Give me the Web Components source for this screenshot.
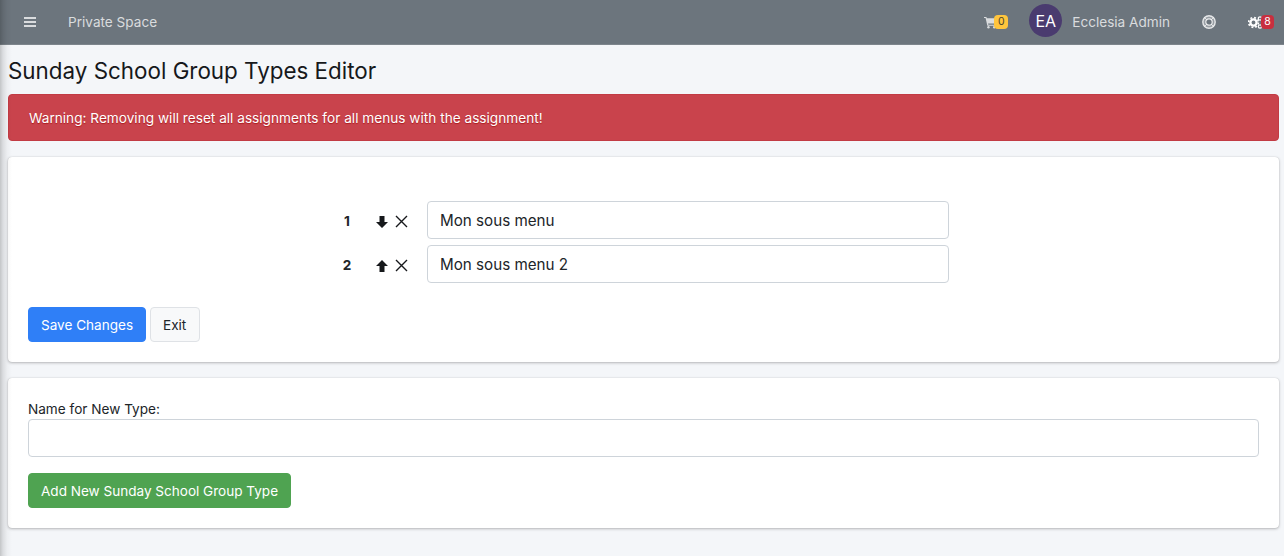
<!DOCTYPE html>
<html lang="en"><head><meta charset="utf-8"><title>Editor</title>
<style>
html,body{margin:0;padding:0;height:100%}
body{background:#f4f6f9;font-family:Inter,"Liberation Sans",sans-serif;font-size:13.6px;color:#212529;overflow:hidden}
</style></head><body>
<app-shell>
<top-bar></top-bar>
<page-title>Sunday School Group Types Editor</page-title>
<warn-alert>Warning: Removing will reset all assignments for all menus with the assignment!</warn-alert>
<ui-card pad="44px 20px 20px">
  <type-list>
    <type-row num="1" dir="down" value="Mon sous menu"></type-row>
    <type-row num="2" dir="up" value="Mon sous menu 2"></type-row>
  </type-list>
  <btn-row>
    <ui-btn kind="primary">Save Changes</ui-btn>
    <ui-btn kind="light">Exit</ui-btn>
  </btn-row>
</ui-card>
<ui-card pad="23px 20px 20px">
  <new-type label="Name for New Type:"></new-type>
  <btn-row><ui-btn kind="success">Add New Sunday School Group Type</ui-btn></btn-row>
</ui-card>
</app-shell>
<script>
function def(name, html){
  customElements.define(name, class extends HTMLElement{
    connectedCallback(){
      if(this.shadowRoot) return;
      this.attachShadow({mode:'open'}).innerHTML = html;
    }
  });
}
def('app-shell',`<style>
:host{display:block;position:relative;height:556px;overflow:hidden}
.shade{position:absolute;left:0;top:0;bottom:0;width:12px;pointer-events:none;background:linear-gradient(to right,rgba(0,0,0,.2),rgba(0,0,0,.1) 25%,rgba(0,0,0,.03) 60%,rgba(0,0,0,0))}
</style><slot></slot><div class="shade"></div>`);
def('top-bar',`<style>
:host{display:flex;align-items:center;height:45px;box-sizing:border-box;background:#6c757d;border-bottom:1px solid #7d858c;color:rgba(255,255,255,.75);font-size:13.6px;line-height:16px}
.burger{margin-left:24px;width:12px;height:12px;display:block}
.brand{margin-left:32px;margin-top:-1px}
.sp{flex:1}
.cart{position:relative;width:24px;height:16px;margin-right:21px}
.cart svg{position:absolute;left:0;top:2px;width:13px;height:13px}
.badge{position:absolute;font-size:10.5px;line-height:14px;height:14px;border-radius:4px;text-align:center}
.cart .badge{left:10px;top:1px;width:14px;background:#ffc53d;color:#4a4630}
.av{align-self:flex-start;margin-top:4px;width:33px;height:33px;border-radius:50%;background:#4a3b6f;color:#fff;font-size:16px;display:flex;align-items:center;justify-content:center;margin-right:10px}
.name{margin-right:32px;margin-top:-1px}
.ring{width:14px;height:14px;margin-right:32px;display:block;margin-top:-1px}
.gear{position:relative;width:26px;height:16px;margin-right:10px}
.gear svg{position:absolute;left:0;top:2px;width:16px;height:13px}
.gear .badge{left:13px;top:1px;width:13px;background:#c82f3f;color:#fff}
</style>
<svg class="burger" viewBox="0 0 12 12"><path d="M0 1h12v2H0zM0 5h12v2H0zM0 9h12v2H0z" fill="currentColor"/></svg>
<span class="brand">Private Space</span><span class="sp"></span>
<span class="cart"><svg viewBox="0 0 14 13"><path d="M0 .5h2.6l.4 1.5H14l-1.4 5.6H4.4l.3 1.2h7.8v1.2H3.6L1.7 1.7H0z" fill="currentColor"/><circle cx="4.8" cy="11.6" r="1.3" fill="currentColor"/><circle cx="11" cy="11.6" r="1.3" fill="currentColor"/></svg><span class="badge">0</span></span>
<span class="av">EA</span><span class="name">Ecclesia Admin</span>
<svg class="ring" viewBox="0 0 14 14" fill="none"><circle cx="7" cy="7" r="4.7" stroke="rgba(255,255,255,.3)" stroke-width="3.2"/><circle cx="7" cy="7" r="6.2" stroke="rgba(255,255,255,.8)" stroke-width="1.4"/><circle cx="7" cy="7" r="3.2" stroke="rgba(255,255,255,.8)" stroke-width="1.2"/><path d="M2.6 2.600l2.200 2.200M11.400 2.600L9.200 4.800M2.600 11.400l2.200-2.200M11.400 11.400L9.200 9.200" stroke="rgba(255,255,255,.7)" stroke-width="1"/></svg>
<span class="gear"><svg viewBox="0 0 16 13" fill="none" stroke="#fff"><circle cx="5.500" cy="6.500" r="3.100" stroke-width="2.300"/><circle cx="5.500" cy="6.500" r="4.900" stroke-width="1.700" stroke-dasharray="1.900 1.950"/><circle cx="12" cy="2.500" r="1.700" stroke-width="1.200"/><circle cx="12" cy="10.500" r="1.700" stroke-width="1.200"/></svg><span class="badge">8</span></span>`);
def('page-title',`<style>:host{display:block;margin:12px 5px 0 8px;font-size:22.4px;line-height:27px;height:37px;color:#16181b;font-weight:400}</style><slot></slot>`);
def('warn-alert',`<style>:host{display:block;margin:0 5px 16px 8px;height:47px;box-sizing:border-box;padding:0 20px;line-height:46px;background:#c9434c;border:1px solid #c23b44;border-radius:4px;color:#fff;font-size:13.65px;text-shadow:0 1px 1px rgba(150,0,0,.6)}</style><slot></slot>`);
customElements.define('ui-card', class extends HTMLElement{
  connectedCallback(){ if(this.shadowRoot) return;
    this.attachShadow({mode:'open'}).innerHTML=`<style>:host{display:block;margin:0 5px 16px 8px;padding:${this.getAttribute('pad')};background:#fff;border-radius:4px;box-shadow:0 0 1px rgba(0,0,0,.2),0 1px 3px rgba(0,0,0,.25)}</style><slot></slot>`;
  }});
def('type-list',`<style>:host{display:flex;flex-direction:column;gap:6px;margin-bottom:24px}</style><slot></slot>`);
customElements.define('type-row', class extends HTMLElement{
  connectedCallback(){ if(this.shadowRoot) return;
    const up=this.getAttribute('dir')==='up';
    const arrow=up?'M6 0L12 6H8.500V12H3.500V6H0z':'M6 12L0 6h3.500V0h5v6H12z';
    this.attachShadow({mode:'open'}).innerHTML=`<style>
:host{display:flex;align-items:center;height:38px;padding-left:299px}
.n{width:40px;text-align:center;font-weight:700;font-size:13.6px;padding-top:1px}
.ic{display:flex;align-items:center;gap:7px;width:60px;padding-top:3px;box-sizing:border-box;padding-left:9px}
.ar{width:12px;height:12px}
.x{width:13px;height:13px}
input{width:522px;height:38px;box-sizing:border-box;border:1px solid #ced4da;border-radius:4px;padding:0 12px;font:15.2px Inter,"Liberation Sans",sans-serif;color:#212529;background:#fff;outline:0;margin:0}
</style><span class="n">${this.getAttribute('num')}</span>
<span class="ic"><svg class="ar" viewBox="0 0 12 12"><path d="${arrow}" fill="#16181b"/></svg><svg class="x" viewBox="0 0 13 13"><path d="M1 1l11 11M12 1L1 12" stroke="#16181b" stroke-width="1.400" fill="none"/></svg></span>
<input value="${this.getAttribute('value')}" aria-label="Type name">`;
  }});
def('btn-row',`<style>:host{display:flex;gap:4px}</style><slot></slot>`);
customElements.define('ui-btn', class extends HTMLElement{
  connectedCallback(){ if(this.shadowRoot) return;
    const kind=this.getAttribute('kind');
    const k={primary:['#2f7ff7','#2f7ff7','#fff'],light:['#f8f9fa','#dfe2e6','#212529'],success:['#4fa351','#4fa351','#fff']}[kind];
    this.attachShadow({mode:'open'}).innerHTML=`<style>:host{display:inline-block;height:35px;box-sizing:border-box;padding:0 ${kind==='light'?13:12}px 0 12px;line-height:34px;background:${k[0]};border:1px solid ${k[1]};color:${k[2]};border-radius:4px;font-size:13.55px;white-space:nowrap}</style><slot></slot>`;
  }});
customElements.define('new-type', class extends HTMLElement{
  connectedCallback(){ if(this.shadowRoot) return;
    this.attachShadow({mode:'open'}).innerHTML=`<style>
:host{display:block;margin-bottom:16px}
label{display:block;font-size:13.6px;line-height:16px;margin-bottom:2px;color:#212529}
input{display:block;width:100%;height:38px;box-sizing:border-box;border:1px solid #ced4da;border-radius:4px;background:#fff;margin:0;outline:0}
</style><label for="f">${this.getAttribute('label')}</label><input id="f">`;
  }});
</script>
</body></html>
